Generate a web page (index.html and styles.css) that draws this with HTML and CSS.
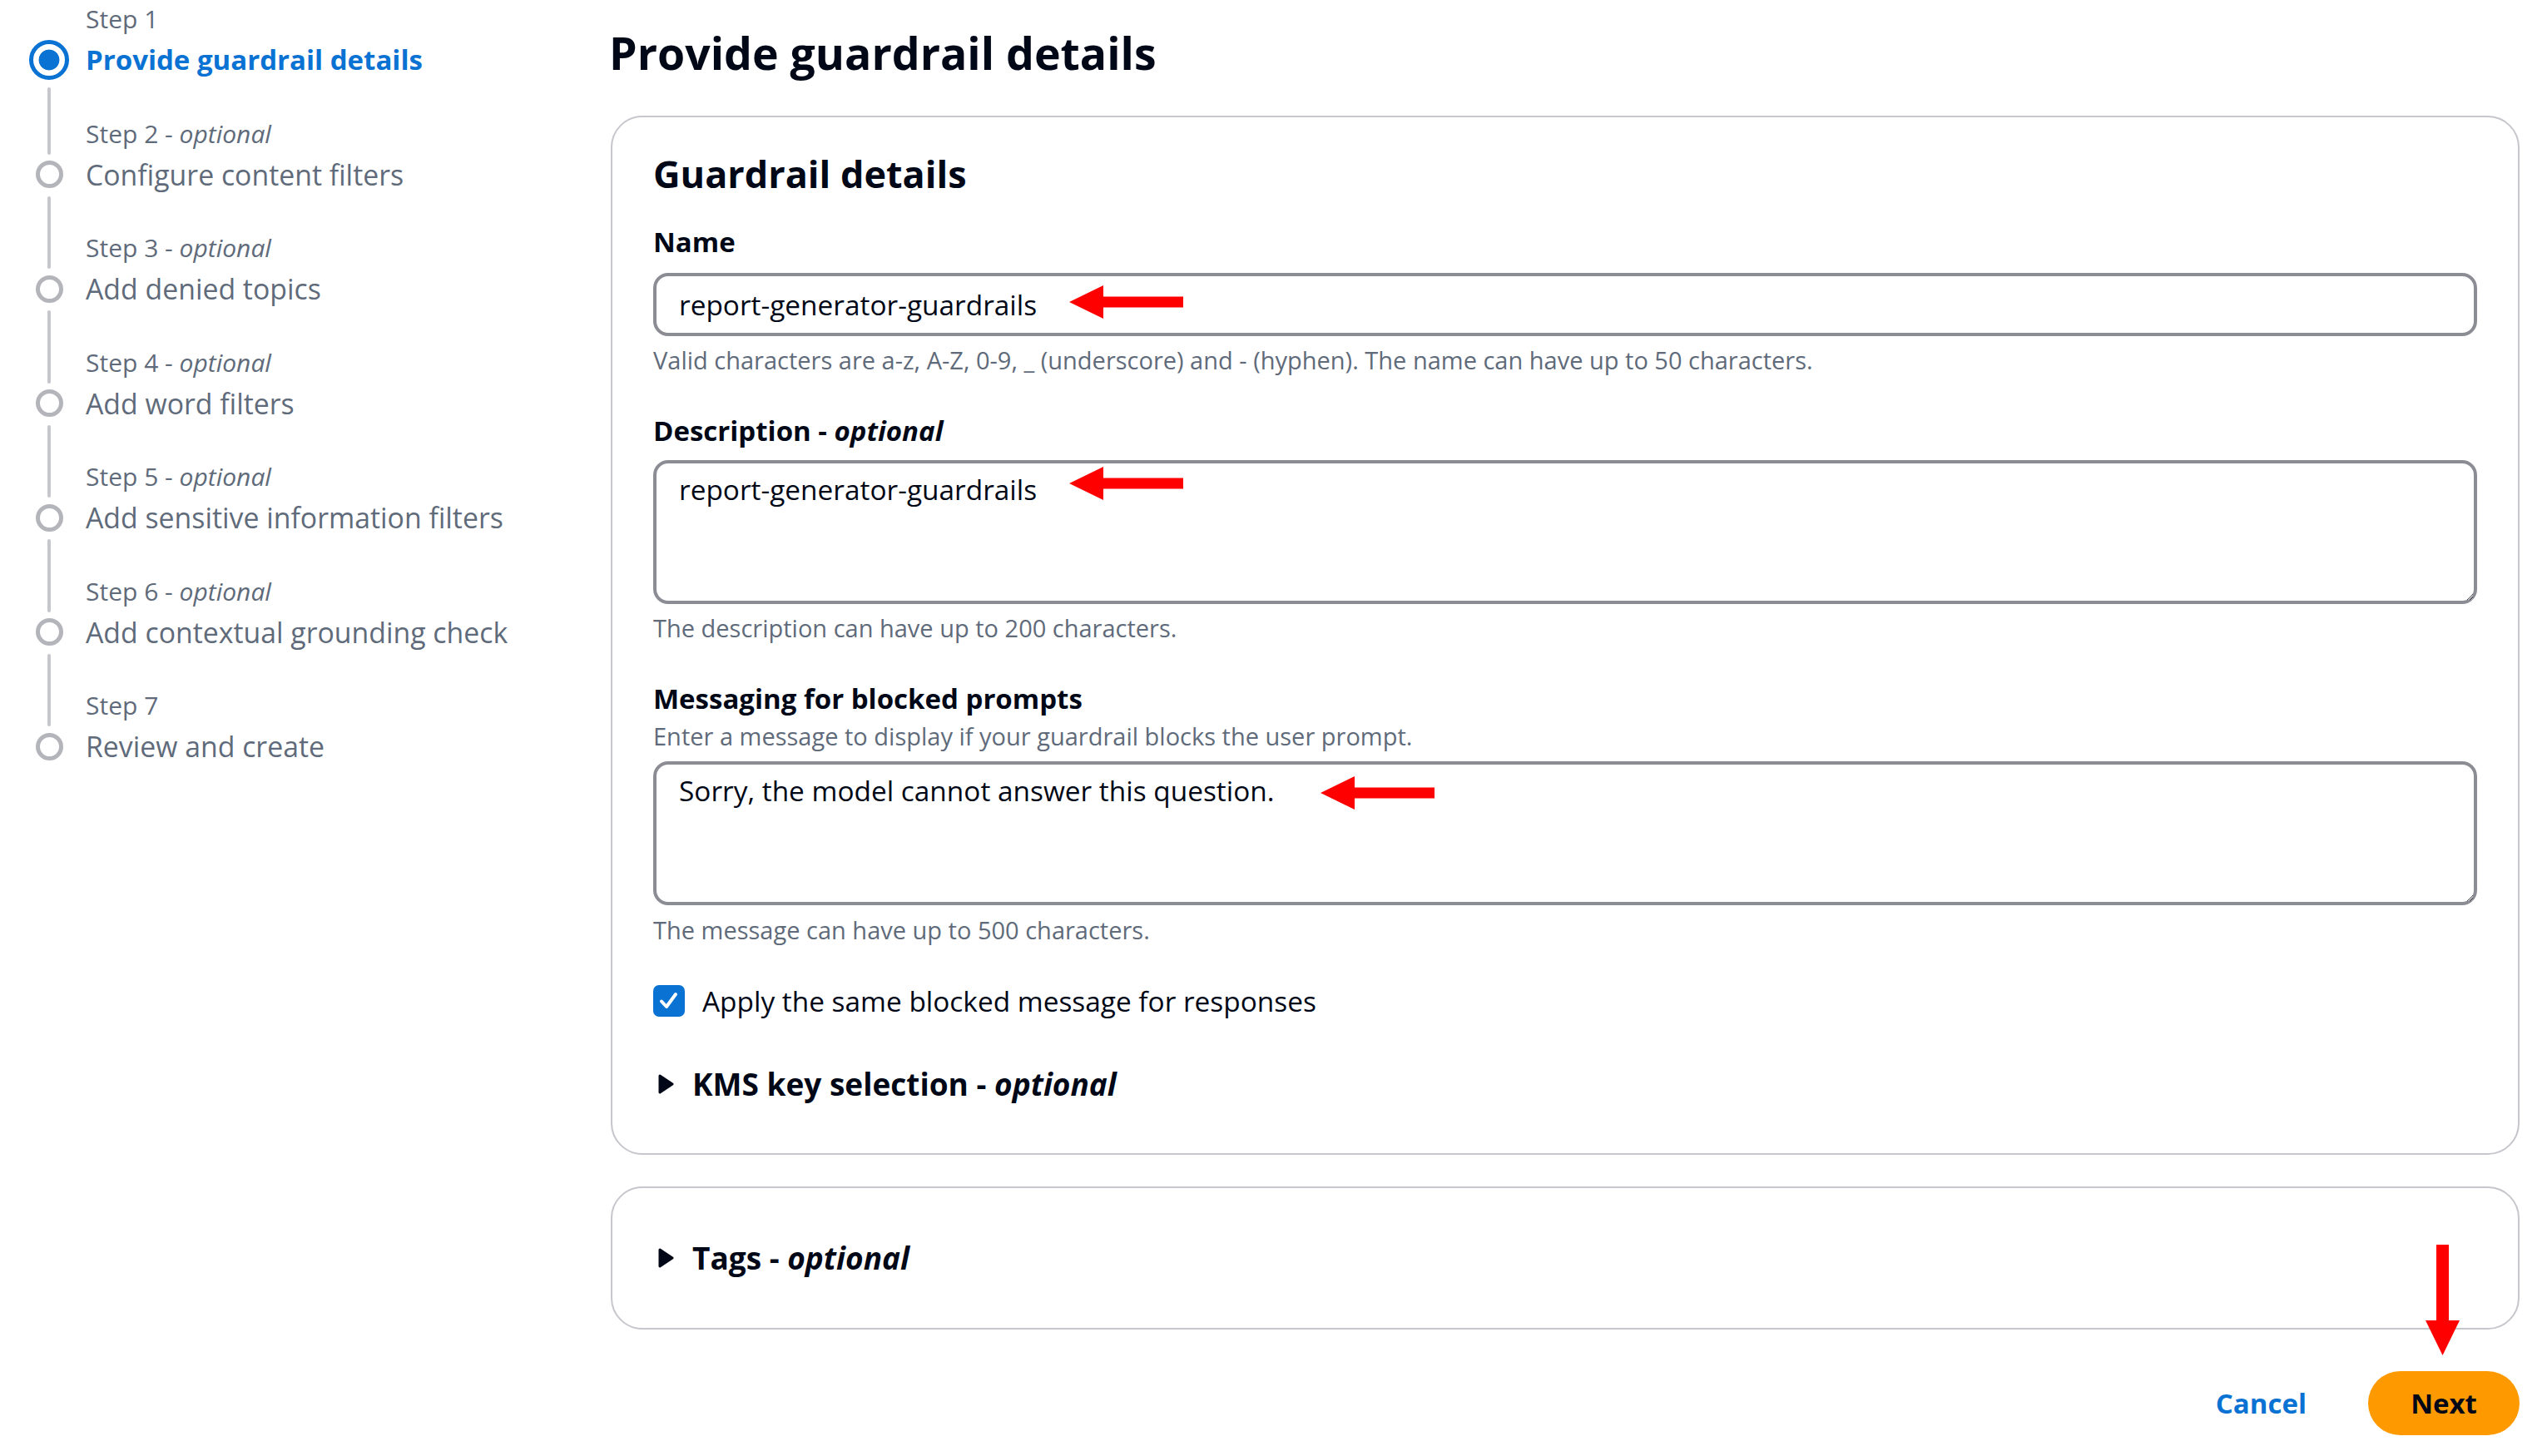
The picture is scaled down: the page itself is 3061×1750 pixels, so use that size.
FILE: index.html
```html
<!DOCTYPE html>
<html lang="en">
<head>
<meta charset="utf-8">
<title>Provide guardrail details</title>
<link rel="stylesheet" href="styles.css">
</head>
<body>
<div class="page">
  <nav class="wizard-nav">
    <ol class="steps">
      <li class="step step-first step-active">
        <span class="step-label">Step 1</span>
        <span class="step-marker"><span class="dot dot-active"></span></span>
        <span class="step-name">Provide guardrail details</span>
      </li>
      <li class="step step-after-active">
        <span class="step-line"></span>
        <span class="step-label">Step 2 - <i>optional</i></span>
        <span class="step-marker"><span class="dot"></span></span>
        <span class="step-name">Configure content filters</span>
      </li>
      <li class="step">
        <span class="step-line"></span>
        <span class="step-label">Step 3 - <i>optional</i></span>
        <span class="step-marker"><span class="dot"></span></span>
        <span class="step-name">Add denied topics</span>
      </li>
      <li class="step">
        <span class="step-line"></span>
        <span class="step-label">Step 4 - <i>optional</i></span>
        <span class="step-marker"><span class="dot"></span></span>
        <span class="step-name">Add word filters</span>
      </li>
      <li class="step">
        <span class="step-line"></span>
        <span class="step-label">Step 5 - <i>optional</i></span>
        <span class="step-marker"><span class="dot"></span></span>
        <span class="step-name">Add sensitive information filters</span>
      </li>
      <li class="step">
        <span class="step-line"></span>
        <span class="step-label">Step 6 - <i>optional</i></span>
        <span class="step-marker"><span class="dot"></span></span>
        <span class="step-name">Add contextual grounding check</span>
      </li>
      <li class="step">
        <span class="step-line"></span>
        <span class="step-label">Step 7</span>
        <span class="step-marker"><span class="dot"></span></span>
        <span class="step-name">Review and create</span>
      </li>
    </ol>
  </nav>

  <main class="content">
    <h1 class="page-title">Provide guardrail details</h1>

    <section class="container">
      <h2 class="container-title">Guardrail details</h2>

      <div class="field field-first">
        <label class="field-label" for="gname">Name</label>
        <div class="control">
          <input id="gname" class="input" type="text" value="report-generator-guardrails">
          <svg class="annot annot-name" width="137" height="40" viewBox="0 0 137 40"><polygon points="0,20 41,0 41,13.5 137,13.5 137,26.5 41,26.5 41,40" fill="#ff0000"/></svg>
        </div>
        <div class="hint">Valid characters are a-z, A-Z, 0-9, _ (underscore) and - (hyphen). The name can have up to 50 characters.</div>
      </div>

      <div class="field">
        <label class="field-label" for="gdesc">Description - <i>optional</i></label>
        <div class="control control-area">
          <textarea id="gdesc" class="textarea">report-generator-guardrails</textarea>
          <svg class="annot annot-desc" width="137" height="40" viewBox="0 0 137 40"><polygon points="0,20 41,0 41,13.5 137,13.5 137,26.5 41,26.5 41,40" fill="#ff0000"/></svg>
        </div>
        <div class="hint">The description can have up to 200 characters.</div>
      </div>

      <div class="field field-msg">
        <label class="field-label" for="gmsg">Messaging for blocked prompts</label>
        <div class="field-desc">Enter a message to display if your guardrail blocks the user prompt.</div>
        <div class="control control-after-desc">
          <textarea id="gmsg" class="textarea">Sorry, the model cannot answer this question.</textarea>
          <svg class="annot annot-msg" width="137" height="40" viewBox="0 0 137 40"><polygon points="0,20 41,0 41,13.5 137,13.5 137,26.5 41,26.5 41,40" fill="#ff0000"/></svg>
        </div>
        <div class="hint hint-msg">The message can have up to 500 characters.</div>
      </div>

      <div class="checkbox-row">
        <span class="checkbox">
          <svg width="38" height="38" viewBox="0 0 38 38"><polyline points="10,19.5 16,26 27,11" fill="none" stroke="#ffffff" stroke-width="4" stroke-linecap="round" stroke-linejoin="round"/></svg>
        </span>
        <span class="checkbox-label">Apply the same blocked message for responses</span>
      </div>

      <div class="expander expander-kms">
        <svg class="caret" width="20" height="24" viewBox="0 0 20 24"><polygon points="3,2 18,12 3,22" fill="#000716" stroke="#000716" stroke-width="3" stroke-linejoin="round"/></svg>
        <span class="expander-title">KMS key selection - <i>optional</i></span>
      </div>
    </section>

    <section class="container container-tags">
      <div class="expander">
        <svg class="caret" width="20" height="24" viewBox="0 0 20 24"><polygon points="3,2 18,12 3,22" fill="#000716" stroke="#000716" stroke-width="3" stroke-linejoin="round"/></svg>
        <span class="expander-title">Tags - <i>optional</i></span>
      </div>
    </section>

    <div class="actions">
      <button class="btn-link" type="button">Cancel</button>
      <button class="btn-primary" type="button">Next</button>
      <svg class="annot annot-down" width="41" height="133" viewBox="0 0 41 133"><polygon points="13,0 28,0 28,91 41,91 20.5,133 0,91 13,91" fill="#ff0000"/></svg>
    </div>
  </main>
</div>
</body>
</html>
```

FILE: styles.css
```css
* {
  box-sizing: border-box;
}

html, body {
  margin: 0;
  padding: 0;
  background: #ffffff;
}

body {
  font-family: "Open Sans", "Liberation Sans", sans-serif;
  color: #000716;
}

.page {
  display: flex;
  width: 3061px;
}

/* ---------- Wizard navigation ---------- */
.wizard-nav {
  width: 734px;
  flex-shrink: 0;
  padding-left: 35px;
}

.steps {
  list-style: none;
  margin: -2px 0 0;
  padding: 0;
}

.step {
  display: grid;
  grid-template-columns: 48px 1fr;
  column-gap: 20px;
  grid-template-areas:
    "line label"
    "marker name";
}

.step-line {
  grid-area: line;
  justify-self: center;
  width: 4px;
  margin-top: 2px;
  background: #c6c6cd;
  border-radius: 2px;
}

.step-after-active .step-line {
  margin-top: 9px;
}

.step-label {
  grid-area: label;
  font-size: 30px;
  line-height: 50px;
  color: #5f6b7a;
  padding-top: 39.5px;
  white-space: nowrap;
}

.step-first .step-label {
  padding-top: 0;
}

.step-marker {
  grid-area: marker;
  height: 48px;
  display: flex;
  align-items: center;
  justify-content: center;
}

.dot {
  width: 33px;
  height: 33px;
  border: 5px solid #b4b4bb;
  border-radius: 50%;
  background: #ffffff;
}

.dot-active {
  width: 48px;
  height: 48px;
  border-color: #0972d3;
  background: radial-gradient(circle, #0972d3 0 12px, #ffffff 12.8px);
}

.step-name {
  grid-area: name;
  font-size: 33.8px;
  line-height: 48px;
  color: #5f6b7a;
  white-space: nowrap;
}

.step-active .step-name {
  color: #0972d3;
  font-size: 33px;
  font-weight: 700;
}

/* ---------- Main content ---------- */
.content {
  flex: 1;
  min-width: 0;
  padding-right: 33px;
}

.page-title {
  margin: 29px 0 40px -2px;
  font-size: 53.6px;
  line-height: 70px;
  font-weight: 700;
}

.container {
  border: 2px solid #c6c6cd;
  border-radius: 38px;
  padding: 38px 49px 58px;
}

.container-title {
  margin: 0;
  font-size: 45px;
  line-height: 60px;
  font-weight: 700;
}

.field {
  margin-top: 45px;
}

.field-first {
  margin-top: 32px;
}

.field-label {
  display: block;
  font-size: 33px;
  line-height: 40px;
  font-weight: 700;
}

.field-desc {
  margin-top: 5px;
  font-size: 29px;
  line-height: 40px;
  color: #5f6b7a;
}

.control {
  position: relative;
  margin-top: 17px;
}

.control-area {
  margin-top: 15px;
}

.control-after-desc {
  margin-top: 10px;
}

.input {
  display: block;
  width: 100%;
  height: 76px;
  border: 4px solid #8c8c94;
  border-radius: 18px;
  padding: 0 27px;
  font-family: "Open Sans", "Liberation Sans", sans-serif;
  font-size: 33.4px;
  color: #000716;
  background: #ffffff;
  outline: none;
}

.textarea {
  display: block;
  width: 100%;
  height: 173px;
  border: 4px solid #8c8c94;
  border-radius: 18px;
  padding: 11px 27px;
  font-family: "Open Sans", "Liberation Sans", sans-serif;
  font-size: 33.4px;
  line-height: 40px;
  color: #000716;
  background: #ffffff;
  resize: vertical;
  outline: none;
}

.hint {
  margin-top: 9px;
  font-size: 29px;
  line-height: 40px;
  color: #5f6b7a;
}

.hint-msg {
  margin-top: 10px;
}

.annot {
  position: absolute;
  display: block;
}

.annot-name {
  left: 500px;
  top: 15px;
}

.annot-desc {
  left: 500px;
  top: 8px;
}

.annot-msg {
  left: 802px;
  top: 18px;
}

/* ---------- Checkbox ---------- */
.checkbox-row {
  margin-top: 41px;
  display: flex;
  align-items: center;
  gap: 21px;
  height: 48px;
}

.checkbox {
  width: 38px;
  height: 38px;
  border-radius: 7px;
  background: #0972d3;
  flex-shrink: 0;
}

.checkbox svg {
  display: block;
}

.checkbox-label {
  font-size: 33.4px;
  line-height: 48px;
}

/* ---------- Expandable sections ---------- */
.expander {
  display: flex;
  align-items: center;
  gap: 22px;
  height: 50px;
  padding-left: 5px;
}

.expander-kms {
  margin-top: 51px;
}

.caret {
  display: block;
  flex-shrink: 0;
}

.expander-title {
  font-size: 37px;
  line-height: 50px;
  font-weight: 700;
}

.container-tags {
  margin-top: 38px;
  padding: 59px 49px;
}

/* ---------- Actions ---------- */
.actions {
  position: relative;
  margin-top: 50px;
  display: flex;
  justify-content: flex-end;
  align-items: center;
  gap: 74px;
}

.btn-link {
  border: none;
  background: none;
  padding: 0;
  font-family: "Open Sans", "Liberation Sans", sans-serif;
  font-size: 33px;
  font-weight: 700;
  color: #0972d3;
}

.btn-primary {
  width: 182px;
  height: 77px;
  border: none;
  border-radius: 39px;
  background: #ff9900;
  font-family: "Open Sans", "Liberation Sans", sans-serif;
  font-size: 33px;
  font-weight: 700;
  color: #000716;
}

.annot-down {
  right: 72px;
  top: -152px;
}
```
